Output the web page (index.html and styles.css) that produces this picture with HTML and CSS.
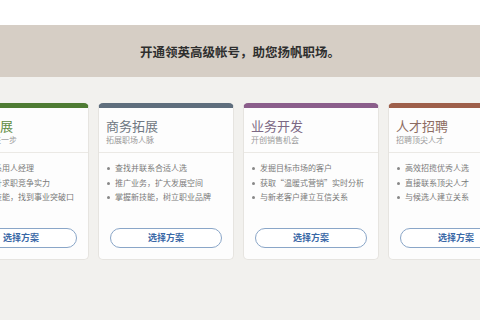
FILE: index.html
```html
<!DOCTYPE html>
<html lang="zh-CN">
<head>
    <meta charset="UTF-8">
    <meta name="viewport" content="width=device-width, initial-scale=1.0">
    <title>领英高级帐号</title>
    <link rel="stylesheet" href="styles.css">
</head>
<body>
    <div class="top"></div>
    <div class="banner">开通领英高级帐号，助您扬帆职场。</div>

    <div class="plans">
        <div class="card career">
            <div class="card-head">
                <h2>职业发展</h2>
                <p>让职业更进一步</p>
            </div>
            <div class="card-body">
                <ul>
                    <li>直接联系用人经理</li>
                    <li>全面提升求职竞争实力</li>
                    <li>掌握新技能，找到事业突破口</li>
                </ul>
                <button>选择方案</button>
            </div>
        </div>

        <div class="card business">
            <div class="card-head">
                <h2>商务拓展</h2>
                <p>拓展职场人脉</p>
            </div>
            <div class="card-body">
                <ul>
                    <li>查找并联系合适人选</li>
                    <li>推广业务，扩大发展空间</li>
                    <li>掌握新技能，树立职业品牌</li>
                </ul>
                <button>选择方案</button>
            </div>
        </div>

        <div class="card sales">
            <div class="card-head">
                <h2>业务开发</h2>
                <p>开创销售机会</p>
            </div>
            <div class="card-body">
                <ul>
                    <li>发掘目标市场的客户</li>
                    <li>获取“温暖式营销”实时分析</li>
                    <li>与新老客户建立互信关系</li>
                </ul>
                <button>选择方案</button>
            </div>
        </div>

        <div class="card talent">
            <div class="card-head">
                <h2>人才招聘</h2>
                <p>招聘顶尖人才</p>
            </div>
            <div class="card-body">
                <ul>
                    <li>高效招揽优秀人选</li>
                    <li>直接联系顶尖人才</li>
                    <li>与候选人建立关系</li>
                </ul>
                <button>选择方案</button>
            </div>
        </div>
    </div>
</body>
</html>
```

FILE: styles.css
```css
body {
    margin: 0;
    height: 320px;
    overflow: hidden;
    background-color: #f2f1ee;
    font-family: "Noto Sans CJK SC", "Noto Sans", sans-serif;
}
.top {
    height: 25px;
    background-color: #ffffff;
}
.banner {
    height: 52px;
    display: flex;
    align-items: center;
    justify-content: center;
    background-color: #d6cec5;
    color: #2e2e2e;
    font-size: 12.5px;
    font-weight: 700;
}
.plans {
    display: flex;
    justify-content: center;
    gap: 9px;
    padding-top: 26px;
    margin-left: -3px;
}
.card {
    flex: none;
    width: 136px;
    box-sizing: border-box;
    background-color: #fdfdfd;
    border: 1px solid #e6e4e0;
    border-top: 5px solid #5f6e7d;
    border-radius: 5px;
}
.card-head {
    padding: 9px 7px 7px;
    border-bottom: 1px solid #ebe9e5;
}
.card-head h2 {
    margin: 0;
    font-size: 13px;
    line-height: 17px;
    font-weight: 400;
    color: #707a84;
}
.card-head p {
    margin: 0;
    font-size: 8px;
    line-height: 11px;
    color: #9a9a9a;
}
.card-body {
    padding: 8px 11px 11px 7px;
}
.card-body ul {
    list-style: none;
    margin: 0 0 23px;
    padding: 0;
}
.card-body li {
    position: relative;
    padding-left: 9px;
    font-size: 8px;
    line-height: 14.5px;
    color: #7a7a7a;
    white-space: nowrap;
}
.card-body li::before {
    content: "";
    position: absolute;
    left: 1px;
    top: 6px;
    width: 3px;
    height: 3px;
    border-radius: 50%;
    background-color: #888;
}
.card-body button {
    display: block;
    width: 112px;
    height: 20px;
    margin-left: 4px;
    padding: 0;
    border: 1px solid #8aa6c8;
    border-radius: 10px;
    background-color: #ffffff;
    color: #3a68a6;
    font-family: inherit;
    font-size: 9px;
    font-weight: 700;
}
.career { border-top-color: #4e7b33; }
.career h2 { color: #5d8c43; }
.business { border-top-color: #5f6e7d; }
.business h2 { color: #6f7882; }
.sales { border-top-color: #8b5e8b; }
.sales h2 { color: #7c6884; }
.talent { border-top-color: #9e5f4a; }
.talent h2 { color: #8d6c62; }
```
